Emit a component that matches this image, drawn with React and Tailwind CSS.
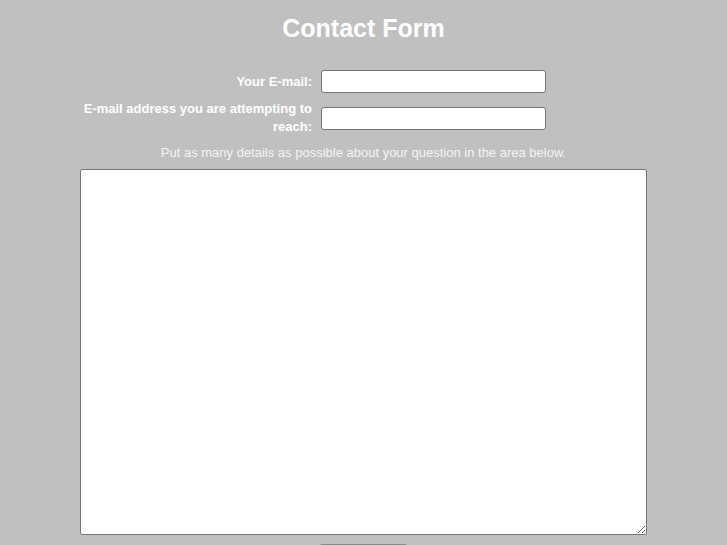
export default function App() {
  return (
    <div className="min-h-screen bg-[#c0c0c0] text-white" style={{ fontFamily: '"Liberation Sans", Arial, sans-serif' }}>
      <h1 className="pt-[13px] text-center text-[25px] font-bold leading-[30px]">Contact Form</h1>

      <form className="mx-auto mt-[27px] w-[567px]">
        <div className="flex items-center gap-[9px]">
          <label className="w-[232px] text-right text-[13px] font-bold leading-[17px]">Your E-mail:</label>
          <input type="text" className="h-[23px] w-[225px] rounded-[3px] border border-[#767676] bg-white px-1 text-sm text-black" />
        </div>

        <div className="mt-[7px] flex items-center gap-[9px]">
          <label className="w-[232px] text-right text-[13px] font-bold leading-[18px]">
            E-mail address you are attempting to reach:
          </label>
          <input type="text" className="h-[23px] w-[225px] rounded-[3px] border border-[#767676] bg-white px-1 text-sm text-black" />
        </div>

        <p className="mt-[8px] text-center text-[13px] leading-[17px] text-[#f4f4f4]">
          Put as many details as possible about your question in the area below.
        </p>

        <textarea className="mt-[8px] block h-[366px] w-[567px] rounded-[2px] border border-[#767676] bg-white p-1 text-sm text-black" />

        <div className="mt-[9px] flex justify-center">
          <button type="button" className="h-[26px] w-[89px] rounded-[3px] border border-[#8a8a8a] bg-[#e9e9e9] text-[13px] text-black">Submit</button>
        </div>
      </form>
    </div>
  )
}
